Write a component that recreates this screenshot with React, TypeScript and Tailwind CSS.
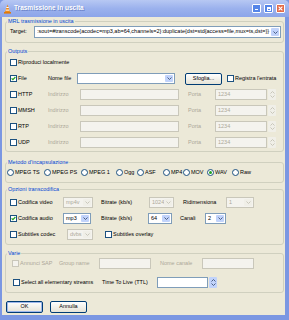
import React from 'react'

const font = { fontFamily: '"Liberation Sans", Arial, sans-serif' }

function Check({ checked = false, disabled = false }: { checked?: boolean; disabled?: boolean }) {
  return (
    <span
      className={
        'flex items-center justify-center w-[7px] h-[7px] shrink-0 border ' +
        (disabled ? 'border-[#c9c7ba] bg-[#f4f3ee]' : 'border-[#1c5180] bg-white')
      }
    >
      {checked && (
        <svg width="5" height="5" viewBox="0 0 5 5">
          <polyline points="0.6,2.4 1.9,3.7 4.4,1" fill="none" stroke="#21a121" strokeWidth="1.2" />
        </svg>
      )}
    </span>
  )
}

function Radio({ checked = false }: { checked?: boolean }) {
  return (
    <span className="flex items-center justify-center w-[7px] h-[7px] shrink-0 rounded-full border border-[#1c5180] bg-white">
      {checked && <span className="w-[3px] h-[3px] rounded-full bg-[#21a121]" />}
    </span>
  )
}

function Arrow({ disabled = false }: { disabled?: boolean }) {
  return (
    <span
      className={
        'flex items-center justify-center w-[8px] h-full shrink-0 rounded-[1px] ' +
        (disabled ? 'bg-[#f0efe8]' : 'bg-[#c1d3fb]')
      }
    >
      <svg width="5" height="3" viewBox="0 0 5 3">
        <polyline points="0.5,0.5 2.5,2.5 4.5,0.5" fill="none" stroke={disabled ? '#c9c7ba' : '#4d6185'} strokeWidth="1" />
      </svg>
    </span>
  )
}

function Combo({ value = '', disabled = false, className = '' }: { value?: string; disabled?: boolean; className?: string }) {
  return (
    <div
      className={
        'flex items-stretch h-[11px] border p-[1px] ' +
        (disabled ? 'border-[#c9c7ba] bg-[#f4f3ee] text-[#aca899] ' : 'border-[#7f9db9] bg-white ') +
        className
      }
    >
      <span className="flex-1 flex items-center pl-[1px] overflow-hidden whitespace-nowrap">{value}</span>
      <Arrow disabled={disabled} />
    </div>
  )
}

function Field({ disabled = false, className = '' }: { disabled?: boolean; className?: string }) {
  return (
    <div
      className={
        'h-[11px] border ' +
        (disabled ? 'border-[#c9c7ba] bg-[#f4f3ee] ' : 'border-[#7f9db9] bg-white ') +
        className
      }
    />
  )
}

function Spin({ value = '', disabled = false, w }: { value?: string; disabled?: boolean; w: string }) {
  return (
    <div className="flex items-center h-[11px]">
      <div
        className={
          'h-full flex items-center pl-[2px] border ' +
          w +
          (disabled ? ' border-[#c9c7ba] bg-[#f4f3ee] text-[#aca899]' : ' border-[#7f9db9] bg-white')
        }
      >
        {value}
      </div>
      <div
        className={
          'ml-[1px] w-[8px] h-full flex flex-col items-center justify-center gap-[1px] rounded-[1px] ' +
          (disabled ? 'bg-[#f0efe8]' : 'bg-[#c1d3fb]')
        }
      >
        <svg width="5" height="3" viewBox="0 0 5 3">
          <polyline points="0.5,2.5 2.5,0.5 4.5,2.5" fill="none" stroke={disabled ? '#c9c7ba' : '#4d6185'} strokeWidth="1" />
        </svg>
        <svg width="5" height="3" viewBox="0 0 5 3">
          <polyline points="0.5,0.5 2.5,2.5 4.5,0.5" fill="none" stroke={disabled ? '#c9c7ba' : '#4d6185'} strokeWidth="1" />
        </svg>
      </div>
    </div>
  )
}

function Button({ label, className = '' }: { label: string; className?: string }) {
  return (
    <button
      className={
        'h-[12px] flex items-center justify-center rounded-[2px] border border-[#003c74] bg-gradient-to-b from-white to-[#e6e3d6] text-black ' +
        className
      }
    >
      {label}
    </button>
  )
}

function Group({ title, className = '', children }: { title: string; className?: string; children: React.ReactNode }) {
  return (
    <fieldset className={'border border-[#d0d0bf] rounded-[3px] pl-[4px] pr-[2px] ' + className}>
      <legend className="-ml-[3px] px-[1px] leading-[7px] text-[#0046d5]">{title}</legend>
      {children}
    </fieldset>
  )
}

function OutputRow({ name }: { name: string }) {
  return (
    <div className="flex items-center h-[11px]">
      <div className="flex items-center gap-[1px] w-[38px]">
        <Check />
        <span>{name}</span>
      </div>
      <span className="w-[32px] text-[#aca899]">Indirizzo</span>
      <Field disabled className="w-[99px]" />
      <span className="ml-[9px] w-[27px] text-[#aca899]">Porta</span>
      <Spin value="1234" disabled w="w-[52px]" />
    </div>
  )
}

const muxes = [
  { label: 'MPEG TS', w: 'w-[37px]' },
  { label: 'MPEG PS', w: 'w-[37px]' },
  { label: 'MPEG 1', w: 'w-[35px]' },
  { label: 'Ogg', w: 'w-[21px]' },
  { label: 'ASF', w: 'w-[26px]' },
  { label: 'MP4', w: 'w-[20px]' },
  { label: 'MOV', w: 'w-[24px]' },
  { label: 'WAV', w: 'w-[25px]' },
  { label: 'Raw', w: 'w-[24px]' },
]

export default function App() {
  return (
    <div
      style={font}
      className="w-[289px] h-[320px] flex flex-col bg-[#7b97e2] text-[5.5px] leading-none text-black overflow-hidden"
    >
      {/* barra del titolo */}
      <div className="h-[17px] shrink-0 flex items-center pl-[3px] pr-[4px] bg-gradient-to-b from-[#b7c8f3] via-[#9bb1ed] to-[#8ca5e9] rounded-t-[5px]">
        <svg width="9" height="10" viewBox="0 0 9 10">
          <polygon points="4.5,0.5 7,8 2,8" fill="#f08a12" />
          <rect x="3.3" y="3" width="2.4" height="1" fill="#fff" />
          <rect x="2.7" y="5.6" width="3.6" height="1" fill="#fff" />
          <rect x="1" y="8" width="7" height="1.6" fill="#e07a0a" />
        </svg>
        <span className="ml-[2px] text-[6.5px] font-bold text-white [text-shadow:1px_1px_0_#6a82c8]">
          Trasmissione in uscita
        </span>
        <div className="ml-auto flex items-center gap-[3px]">
          <span className="w-[9px] h-[9px] flex items-end justify-start p-[2px] rounded-[1px] border border-white bg-[#5585e8]">
            <span className="w-[3px] h-[1px] bg-white" />
          </span>
          <span className="w-[9px] h-[9px] flex p-[1.5px] rounded-[1px] border border-white bg-[#5585e8]">
            <span className="flex-1 border border-white border-t-2" />
          </span>
          <span className="w-[9px] h-[9px] flex items-center justify-center rounded-[1px] border border-white bg-[#e36a48]">
            <svg width="5" height="5" viewBox="0 0 5 5">
              <path d="M0.6 0.6 L4.4 4.4 M4.4 0.6 L0.6 4.4" stroke="#fff" strokeWidth="1.1" />
            </svg>
          </span>
        </div>
      </div>

      {/* corpo */}
      <div className="flex-1 ml-[2px] mr-[4px] mb-[5px] bg-[#ece9d8] flex flex-col pt-[1px] pl-[3px] pr-[1px]">
        <Group title="MRL trasmissione in uscita" className="pb-[4px]">
          <div className="flex items-center mt-[1px]">
            <span className="w-[24px]">Target:</span>
            <Combo
              className="flex-1 h-[12px]"
              value=":sout=#transcode{acodec=mp3,ab=64,channels=2}:duplicate{dst=std{access=file,mux=ts,dst=}}"
            />
          </div>
        </Group>

        <Group title="Outputs" className="mt-[5px] pb-[3px]">
          <div className="flex flex-col gap-[5px] mt-[2px]">
            <div className="flex items-center gap-[1px] h-[11px]">
              <Check />
              <span>Riproduci localmente</span>
            </div>
            <div className="flex items-center h-[11px]">
              <div className="flex items-center gap-[1px] w-[38px]">
                <Check checked />
                <span>File</span>
              </div>
              <span className="w-[29px]">Nome file</span>
              <Combo className="w-[98px]" />
              <Button label="Sfoglia..." className="ml-[10px] w-[37px] h-[11px]" />
              <div className="ml-[5px] flex items-center gap-[1px]">
                <Check />
                <span>Registra l'entrata</span>
              </div>
            </div>
            <OutputRow name="HTTP" />
            <OutputRow name="MMSH" />
            <OutputRow name="RTP" />
            <OutputRow name="UDP" />
          </div>
        </Group>

        <Group title="Metodo d'incapsulazione" className="mt-[7px] pb-[5px]">
          <div className="flex items-center h-[9px] mt-[2px] -ml-[3px]">
            {muxes.map((m) => (
              <div key={m.label} className={'flex items-center gap-[1px] ' + m.w}>
                <Radio checked={m.label === 'WAV'} />
                <span>{m.label}</span>
              </div>
            ))}
          </div>
        </Group>

        <Group title="Opzioni transcodifica" className="mt-[3px] pb-[4px]">
          <div className="flex flex-col gap-[5px] mt-[4px]">
            <div className="flex items-center h-[11px]">
              <div className="flex items-center gap-[1px] w-[53px]">
                <Check />
                <span>Codifica video</span>
              </div>
              <Combo value="mp4v" disabled className="w-[30px]" />
              <span className="ml-[8px] w-[48px]">Bitrate (kb/s)</span>
              <Combo value="1024" disabled className="w-[25px]" />
              <span className="ml-[9px] w-[43px]">Ridimensiona</span>
              <Combo value="1" disabled className="w-[28px]" />
            </div>
            <div className="flex items-center h-[11px]">
              <div className="flex items-center gap-[1px] w-[53px]">
                <Check checked />
                <span>Codifica audio</span>
              </div>
              <Combo value="mp3" className="w-[28px]" />
              <span className="ml-[10px] w-[47px]">Bitrate (kb/s)</span>
              <Combo value="64" className="w-[24px]" />
              <span className="ml-[8px] w-[25px]">Canali</span>
              <Combo value="2" className="w-[21px]" />
            </div>
            <div className="flex items-center h-[11px]">
              <div className="flex items-center gap-[1px] w-[57px]">
                <Check />
                <span>Subtitles codec</span>
              </div>
              <Combo value="dvbs" disabled className="w-[26px]" />
              <div className="ml-[12px] flex items-center gap-[1px]">
                <Check />
                <span>Subtitles overlay</span>
              </div>
            </div>
          </div>
        </Group>

        <Group title="Varie" className="mt-[5px] pb-[4px]">
          <div className="flex flex-col gap-[8px] mt-[1px] pl-[2px]">
            <div className="flex items-center h-[11px]">
              <div className="flex items-center gap-[1px] w-[47px] text-[#aca899]">
                <Check disabled />
                <span>Annunci SAP</span>
              </div>
              <span className="w-[40px] text-[#aca899]">Group name</span>
              <Field disabled className="w-[52px]" />
              <span className="ml-[9px] w-[42px] text-[#aca899]">Nome canale</span>
              <Field disabled className="w-[52px]" />
            </div>
            <div className="flex items-center h-[11px] pl-[1px]">
              <div className="flex items-center gap-[1px] w-[89px]">
                <Check />
                <span>Select all elementary streams</span>
              </div>
              <span className="w-[55px]">Time To Live (TTL)</span>
              <Spin w="w-[51px]" />
            </div>
          </div>
        </Group>

        <div className="flex items-center gap-[7px] mt-[8px] pl-[1px]">
          <Button label="OK" className="w-[37px] border-[#2a5cae] shadow-[inset_0_0_0_1px_#9fb8ec]" />
          <Button label="Annulla" className="w-[37px]" />
        </div>
      </div>
    </div>
  )
}
